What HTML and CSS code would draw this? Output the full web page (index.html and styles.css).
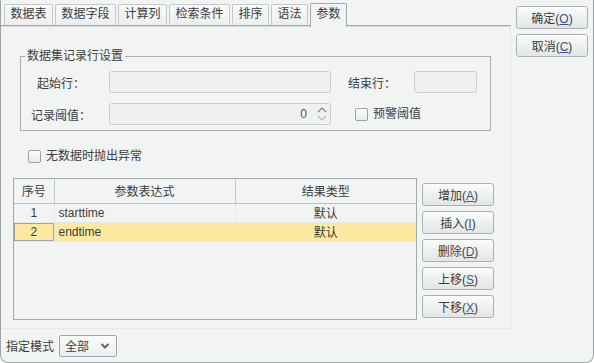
FILE: index.html
```html
<!DOCTYPE html>
<html lang="zh-CN">
<head>
    <meta charset="UTF-8">
    <title>数据集参数</title>
    <link rel="stylesheet" href="styles.css">
</head>
<body>
    <div class="window">
        <div class="main">
            <div class="tabpane">
                <div class="tabs">
                    <div class="tab">数据表</div>
                    <div class="tab">数据字段</div>
                    <div class="tab">计算列</div>
                    <div class="tab">检索条件</div>
                    <div class="tab">排序</div>
                    <div class="tab">语法</div>
                    <div class="tab active">参数</div>
                </div>
                <div class="panel">
                    <fieldset class="group">
                        <legend>数据集记录行设置</legend>
                        <div class="form-row">
                            <span class="lbl">起始行：</span>
                            <div class="field wide"></div>
                            <span class="lbl-end">结束行：</span>
                            <div class="field short"></div>
                        </div>
                        <div class="form-row">
                            <span class="lbl">记录阈值：</span>
                            <div class="field wide spin">
                                <span class="num">0</span>
                                <svg class="arrows" width="12" height="18" viewBox="0 0 12 18">
                                    <path d="M2 7 L6 3 L10 7" fill="none" stroke="#7f878b" stroke-width="1.2"/>
                                    <path d="M2 11 L6 15 L10 11" fill="none" stroke="#b3babd" stroke-width="1.2"/>
                                </svg>
                            </div>
                            <label class="check warn"><span class="box"></span>预警阈值</label>
                        </div>
                    </fieldset>

                    <label class="check solo"><span class="box"></span>无数据时抛出异常</label>

                    <div class="params">
                        <div class="grid">
                            <table>
                                <colgroup>
                                    <col style="width:40px">
                                    <col style="width:181px">
                                    <col>
                                </colgroup>
                                <thead>
                                    <tr>
                                        <th>序号</th>
                                        <th>参数表达式</th>
                                        <th>结果类型</th>
                                    </tr>
                                </thead>
                                <tbody>
                                    <tr>
                                        <td class="c">1</td>
                                        <td>starttime</td>
                                        <td class="c">默认</td>
                                    </tr>
                                    <tr class="selected">
                                        <td class="c focus">2</td>
                                        <td>endtime</td>
                                        <td class="c">默认</td>
                                    </tr>
                                </tbody>
                            </table>
                        </div>
                        <div class="row-btns">
                            <button class="btn">增加(<u>A</u>)</button>
                            <button class="btn">插入(<u>I</u>)</button>
                            <button class="btn">删除(<u>D</u>)</button>
                            <button class="btn">上移(<u>S</u>)</button>
                            <button class="btn">下移(<u>X</u>)</button>
                        </div>
                    </div>
                </div>
            </div>
            <div class="side">
                <button class="btn">确定(<u>O</u>)</button>
                <button class="btn">取消(<u>C</u>)</button>
            </div>
        </div>
        <div class="footer">
            <span>指定模式</span>
            <div class="select">
                <span>全部</span>
                <svg width="10" height="8" viewBox="0 0 10 8">
                    <path d="M1.5 2 L5 5.5 L8.5 2" fill="none" stroke="#5e6468" stroke-width="2"/>
                </svg>
            </div>
        </div>
    </div>
</body>
</html>
```

FILE: styles.css
```css
* {
    box-sizing: border-box;
}
body {
    margin: 0;
    width: 594px;
    height: 363px;
    overflow: hidden;
    background-color: #ffffff;
    font-family: "Liberation Sans", "Noto Sans CJK SC", sans-serif;
    font-size: 12px;
    color: #3c3c3c;
}
.window {
    width: 594px;
    height: 363px;
    background-color: #f2f4f3;
    border: 1px solid #9ea5a8;
    border-top: none;
    border-radius: 0 0 8px 8px;
}
.main {
    display: flex;
}
.tabpane {
    width: 510px;
}
.tabs {
    display: flex;
    align-items: flex-end;
    gap: 2px;
    height: 25px;
    padding-left: 3px;
}
.tab {
    height: 21px;
    padding: 0 5.5px;
    line-height: 19px;
    border: 1px solid #c3c9cb;
    border-bottom: none;
    border-radius: 2px 2px 0 0;
    background: linear-gradient(#f9fafa, #eceeef);
}
.tab.active {
    position: relative;
    z-index: 1;
    height: 24px;
    margin-bottom: -2px;
    line-height: 21px;
    border-color: #a3aaad;
    background: #f2f4f3;
}
.panel {
    height: 304px;
    border-top: 1px solid #a3aaad;
    border-right: 1px solid #e1e4e4;
    border-bottom: 1px solid #e6e9e9;
    box-shadow: inset 0 1px 0 #d6dadb;
}

/* group box */
.group {
    width: 471px;
    margin: 23px 0 0 19px;
    padding: 0 0 5px 0;
    border: 1px solid #a8aeb0;
}
.group legend {
    margin-left: 4px;
    padding: 0 2px;
    line-height: 14px;
}
.form-row {
    display: flex;
    align-items: center;
    height: 22px;
    margin-top: 8px;
}
.form-row + .form-row {
    margin-top: 10px;
}
.lbl {
    width: 80px;
    margin-right: 8px;
    text-align: center;
}
.lbl-end {
    margin-left: 17px;
    margin-right: 18px;
}
.field {
    height: 22px;
    border: 1px solid #c9cecf;
    border-radius: 3px;
    background-color: #eff1f1;
}
.field.wide {
    width: 222px;
}
.field.short {
    width: 63px;
}
.spin {
    display: flex;
    align-items: center;
    justify-content: flex-end;
    padding-right: 2px;
}
.spin .num {
    margin-right: 9px;
    color: #555;
}

/* checkboxes */
.check {
    display: flex;
    align-items: center;
    gap: 5px;
    line-height: 14px;
}
.box {
    width: 13px;
    height: 13px;
    border: 1px solid #98a2a7;
    border-radius: 2px;
    background: linear-gradient(#fbfcfc, #e9ecec);
}
.warn {
    margin-left: 24px;
}
.solo {
    margin: 18px 0 0 27px;
}

/* parameter table */
.params {
    display: flex;
    gap: 5px;
    margin: 15px 0 0 12px;
}
.grid {
    width: 404px;
    height: 142px;
    border: 1px solid #a3aaad;
}
table {
    width: 100%;
    table-layout: fixed;
    border-collapse: collapse;
}
th {
    height: 24px;
    padding: 0;
    font-weight: normal;
    border-right: 1px solid #c3c9cb;
    border-bottom: 1px solid #bac1c3;
}
th:last-child {
    border-right: none;
}
td {
    height: 19px;
    padding: 0 0 0 4px;
    border-right: 1px solid #e5e8e8;
    border-bottom: 1px solid #e5e8e8;
    white-space: nowrap;
}
td.c {
    padding: 0;
    text-align: center;
}
td:last-child {
    border-right: none;
}
tr.selected td {
    background-color: #fde9a0;
}
td.focus {
    box-shadow: inset 0 0 0 1px #9aa5aa;
}
.row-btns {
    display: flex;
    flex-direction: column;
    gap: 5px;
    margin-top: 5px;
}

/* buttons */
.btn {
    width: 72px;
    height: 23px;
    padding: 0;
    font-family: inherit;
    font-size: 12px;
    color: #3c3c3c;
    border: 1px solid #a9b1b5;
    border-radius: 3px;
    background: linear-gradient(#fbfcfc, #eef0f0 50%, #e3e6e7);
}
.btn u {
    color: #37558c;
}
.side {
    display: flex;
    flex-direction: column;
    gap: 5px;
    margin: 6px 0 0 5px;
}

/* footer */
.footer {
    display: flex;
    align-items: center;
    gap: 5px;
    height: 33px;
    padding-left: 5px;
}
.select {
    display: flex;
    align-items: center;
    justify-content: space-between;
    width: 58px;
    height: 22px;
    padding: 0 6px 0 5px;
    border: 1px solid #9ea7ab;
    border-radius: 2px;
    background: linear-gradient(#fbfcfc, #eceeee);
}
```
